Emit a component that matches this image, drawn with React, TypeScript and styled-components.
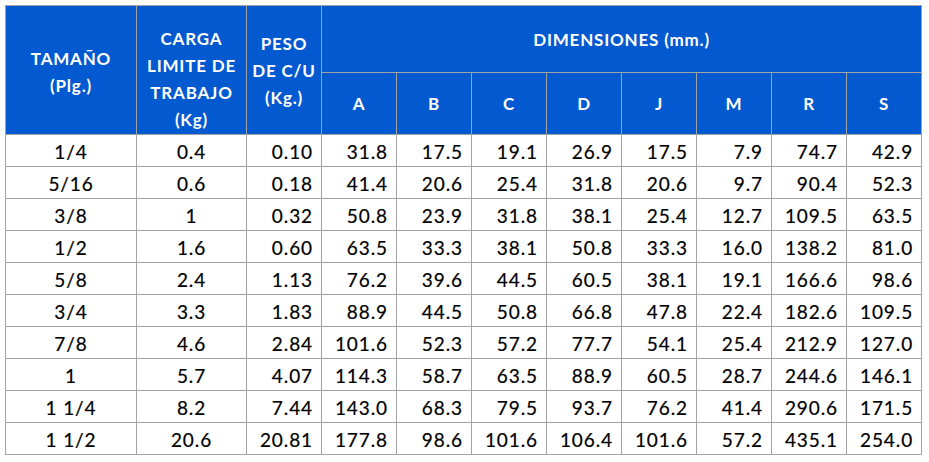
import React from "react";
import styled, { createGlobalStyle } from "styled-components";

const BLUE = "#0359cf";
const GRID = "#a3a3a3";

const GlobalStyle = createGlobalStyle`
	html, body {
		margin: 0;
		background: #ffffff;
	}
`;

const Page = styled.div`
	padding: 5px;
	font-family: Lato, "Open Sans", sans-serif;
`;

const Table = styled.table`
	border-collapse: collapse;
	table-layout: fixed;
	width: 917px;
	border: 1px solid ${GRID};
`;

const HeadCell = styled.th<{ $shift?: number }>`
	background: ${BLUE};
	color: #ffffff;
	border: 1px solid ${GRID};
	font-weight: 700;
	font-size: 17px;
	letter-spacing: 0.8px;
	line-height: 27px;
	text-align: center;
	vertical-align: middle;
	padding: ${(p) => p.$shift || 0}px 0 0 0;
`;

const TopRow = styled.tr`
	height: 67px;
`;

const SubRow = styled.tr`
	height: 62px;
`;

const BodyRow = styled.tr`
	height: 32px;
`;

const Cell = styled.td<{ $align: "center" | "right" }>`
	border: 1px solid ${GRID};
	color: #000000;
	font-size: 19px;
	letter-spacing: 0.9px;
	text-align: ${(p) => p.$align};
	padding: 1px ${(p) => (p.$align === "right" ? 8 : 0)}px 0 0;
	vertical-align: middle;
	white-space: nowrap;
	-webkit-text-stroke: 0.2px #000000;
`;

const dims = ["A", "B", "C", "D", "J", "M", "R", "S"];

const rows: string[][] = [
	["1/4", "0.4", "0.10", "31.8", "17.5", "19.1", "26.9", "17.5", "7.9", "74.7", "42.9"],
	["5/16", "0.6", "0.18", "41.4", "20.6", "25.4", "31.8", "20.6", "9.7", "90.4", "52.3"],
	["3/8", "1", "0.32", "50.8", "23.9", "31.8", "38.1", "25.4", "12.7", "109.5", "63.5"],
	["1/2", "1.6", "0.60", "63.5", "33.3", "38.1", "50.8", "33.3", "16.0", "138.2", "81.0"],
	["5/8", "2.4", "1.13", "76.2", "39.6", "44.5", "60.5", "38.1", "19.1", "166.6", "98.6"],
	["3/4", "3.3", "1.83", "88.9", "44.5", "50.8", "66.8", "47.8", "22.4", "182.6", "109.5"],
	["7/8", "4.6", "2.84", "101.6", "52.3", "57.2", "77.7", "54.1", "25.4", "212.9", "127.0"],
	["1", "5.7", "4.07", "114.3", "58.7", "63.5", "88.9", "60.5", "28.7", "244.6", "146.1"],
	["1 1/4", "8.2", "7.44", "143.0", "68.3", "79.5", "93.7", "76.2", "41.4", "290.6", "171.5"],
	["1 1/2", "20.6", "20.81", "177.8", "98.6", "101.6", "106.4", "101.6", "57.2", "435.1", "254.0"],
];

const widths = [131, 110, 75, 75, 75, 75, 75, 75, 75, 75, 75];

export default function App() {
	return (
		<Page>
			<GlobalStyle />
			<Table>
				<colgroup>
					{widths.map((w, i) => (
						<col key={i} style={{ width: w }} />
					))}
				</colgroup>
				<thead>
					<TopRow>
						<HeadCell rowSpan={2} $shift={4}>
							TAMAÑO
							<br />
							(Plg.)
						</HeadCell>
						<HeadCell rowSpan={2} $shift={18}>
							CARGA
							<br />
							LIMITE DE
							<br />
							TRABAJO
							<br />
							(Kg)
						</HeadCell>
						<HeadCell rowSpan={2}>
							PESO
							<br />
							DE C/U
							<br />
							(Kg.)
						</HeadCell>
						<HeadCell colSpan={8}>DIMENSIONES (mm.)</HeadCell>
					</TopRow>
					<SubRow>
						{dims.map((d) => (
							<HeadCell key={d}>{d}</HeadCell>
						))}
					</SubRow>
				</thead>
				<tbody>
					{rows.map((r) => (
						<BodyRow key={r[0]}>
							{r.map((v, i) => (
								<Cell key={i} $align={i < 2 ? "center" : "right"}>
									{v}
								</Cell>
							))}
						</BodyRow>
					))}
				</tbody>
			</Table>
		</Page>
	);
}
